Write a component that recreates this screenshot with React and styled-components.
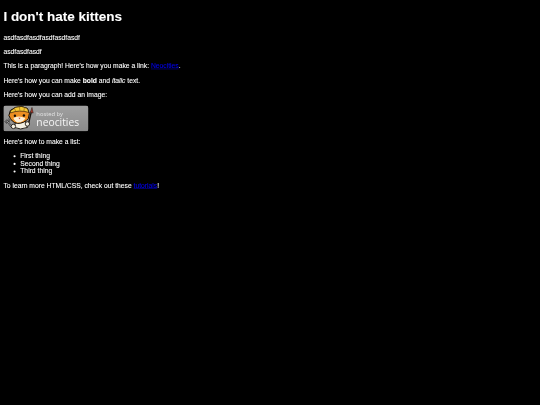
import React from 'react';
import styled, { createGlobalStyle } from 'styled-components';

const GlobalStyle = createGlobalStyle`
    html, body {
        margin: 0;
        height: 405px;
        overflow: hidden;
        background-color: #000;
    }
`;

// the reference is a 1280px wide page shrunk to fit a 540px window
const Viewport = styled.div`
    width: 540px;
    height: 405px;
    overflow: hidden;
    filter: blur(0.33px);
`;

const Page = styled.div`
    display: flow-root;
    box-sizing: border-box;
    width: 1280px;
    height: 960px;
    padding: 0 8px;
    transform: scale(0.421875);
    transform-origin: 0 0;
    color: #fff;
    font-family: "Liberation Sans", Arial, sans-serif;
    font-size: 16px;
    -webkit-text-stroke: 0.2px currentColor;
`;

const Title = styled.h1`
    font-size: 32px;
    font-weight: 700;
    margin: 21.44px 0;
`;

const Paragraph = styled.p`
    margin: 16px 0;
`;

const Link = styled.a`
    color: #0000ee;
    text-decoration: underline;
`;

const List = styled.ul`
    margin: 16px 0;
    padding-left: 40px;
`;

const Badge = styled.svg`
    display: block;
    width: 201.5px;
    height: 61.6px;
    margin-bottom: 4px;
`;

const HostedBadge = () => (
    <Badge viewBox="0 0 85 26" role="img" aria-label="hosted by neocities">
        <defs>
            <linearGradient id="plate" x1="0" y1="0" x2="0" y2="1">
                <stop offset="0" stopColor="#a0a0a0" />
                <stop offset="1" stopColor="#8a8a8a" />
            </linearGradient>
        </defs>
        <rect x="0" y="0" width="85" height="26" rx="2.5" fill="url(#plate)" />
        {/* fork */}
        <path d="M4 16 L9 22" stroke="#111" strokeWidth="1.6" />
        <path d="M1.5 15.5 L3.5 18 M3 14.5 L5 17 M4.8 13.5 L6.5 16" stroke="#111" strokeWidth="1.3" />
        <path d="M4 16 L9 22" stroke="#e8e8e8" strokeWidth="0.7" />
        <path d="M1.5 15.5 L3.5 18 M3 14.5 L5 17 M4.8 13.5 L6.5 16" stroke="#e8e8e8" strokeWidth="0.5" />
        {/* paintbrush */}
        <path d="M25 19 L28 6" stroke="#1a120c" strokeWidth="1.4" />
        <path d="M27 7 L28.6 2 L29.8 7.6 Z" fill="#b23a2e" stroke="#1a120c" strokeWidth="0.5" />
        {/* body */}
        <path d="M12 17 L22 16 L24 22 Q17 25 11 22 Z" fill="#f5f0e2" stroke="#120c06" strokeWidth="0.9" />
        {/* head */}
        <path d="M5.5 10 L7 5 L12 2 Q18 -0.5 24 3 L26 8 L25 13 Q21 18 14 18 Q8 17 5.5 10 Z" fill="#ec8f22" stroke="#120c06" strokeWidth="1" />
        {/* hat */}
        <path d="M7 5.5 L12 2 Q18 -0.5 24 3 L25.5 7 Q16 4 7 7.5 Z" fill="#f6c935" stroke="#120c06" strokeWidth="0.6" />
        <path d="M11 3 L12.5 6 M16 1.6 L16.5 5 M21 2 L20.5 5.5" stroke="#8a5a12" strokeWidth="0.6" />
        <path d="M10 12.5 Q15 9.5 22 12.5 Q20 17 14.5 17 Q11.5 16.5 10 12.5 Z" fill="#fbeed5" />
        <circle cx="11.5" cy="10.3" r="1.2" fill="#120c06" />
        <circle cx="20.5" cy="10" r="1.2" fill="#120c06" />
        <path d="M15 12.4 L17.2 12.4 L16.1 13.8 Z" fill="#c8442f" />
        {/* paws */}
        <circle cx="10" cy="21" r="2.2" fill="#f5f0e2" stroke="#120c06" strokeWidth="0.8" />
        <circle cx="24" cy="18.5" r="2.2" fill="#f5f0e2" stroke="#120c06" strokeWidth="0.8" />
        <text x="33" y="10.3" fontFamily="'Open Sans', sans-serif" fontSize="5.8" fill="#e4e4e4">hosted by</text>
        <text x="33" y="21" fontFamily="'Open Sans', sans-serif" fontSize="10.3" fill="#f6f6f6">neocities</text>
    </Badge>
);

const App = () => (
    <Viewport>
        <GlobalStyle />
        <Page>
            <Title>I don't hate kittens</Title>
            <Paragraph>asdfasdfasdfasdfasdfasdf</Paragraph>
            <Paragraph>asdfasdfasdf</Paragraph>
            <Paragraph>This is a paragraph! Here's how you make a link: <Link href="#">Neocities</Link>.</Paragraph>
            <Paragraph>Here's how you can make <strong>bold</strong> and <em>italic</em> text.</Paragraph>
            <Paragraph>Here's how you can add an image:</Paragraph>
            <HostedBadge />
            <Paragraph>Here's how to make a list:</Paragraph>
            <List>
                <li>First thing</li>
                <li>Second thing</li>
                <li>Third thing</li>
            </List>
            <Paragraph>To learn more HTML/CSS, check out these <Link href="#">tutorials</Link>!</Paragraph>
        </Page>
    </Viewport>
);

export default App;
